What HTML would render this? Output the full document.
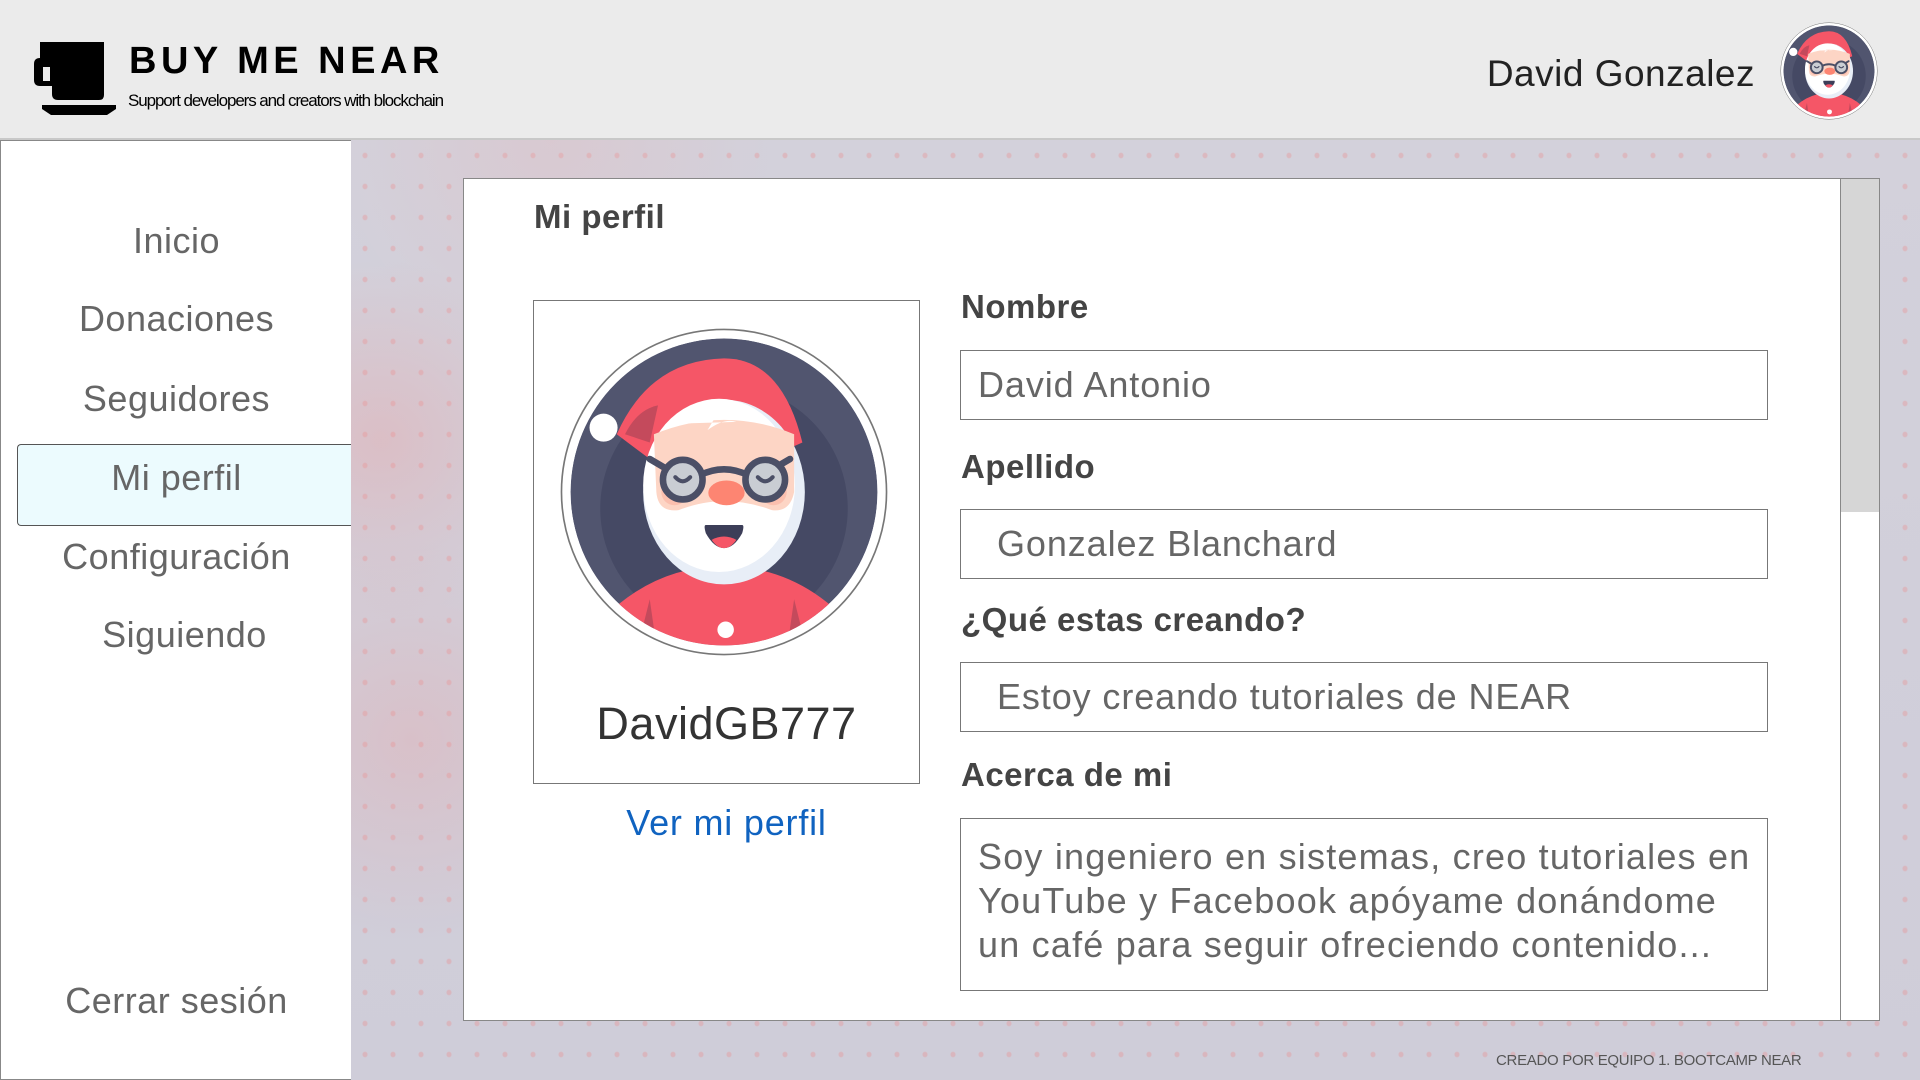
<!DOCTYPE html>
<html><head><meta charset="utf-8"><style>
*{margin:0;padding:0;box-sizing:border-box}
body{width:1920px;height:1080px;overflow:hidden;position:relative;font-family:"Liberation Sans",sans-serif;color:#555;background:#d2d0da;}
.bg{position:absolute;left:351px;top:140px;right:0;bottom:0;background:
radial-gradient(circle at 30px 300px,rgba(240,150,150,.3),transparent 180px),
radial-gradient(circle at 60px 600px,rgba(240,150,150,.25),transparent 200px),
radial-gradient(circle at 200px 0px,rgba(240,170,170,.2),transparent 220px),
radial-gradient(rgba(235,140,140,.35) 2px,transparent 3px) 0 0/28px 31px,
linear-gradient(#d3d1db,#cfcdd9);}
.hdr{position:absolute;left:0;top:0;width:1920px;height:140px;background:#ebebeb;border-bottom:2px solid #c8c8c8}
.side{position:absolute;left:0;top:140px;width:352px;height:940px;background:#fff;border:1px solid #888}
.mi{position:absolute;left:0;width:351px;text-align:center;font-size:36px;color:#666;transform:translateY(-50%);letter-spacing:0.5px}
.sel{position:absolute;left:16px;top:303px;width:336px;height:82px;background:#ecfbfe;border:1px solid #555;border-right:none;border-radius:4px 0 0 4px}
.panel{position:absolute;left:463px;top:178px;width:1378px;height:843px;background:#fff;border:1px solid #888}
.sb{position:absolute;left:1840px;top:178px;width:40px;height:843px;background:#fff;border:1px solid #888}
.sb div{height:333px;background:#d6d6d6}
.lab{position:absolute;left:961px;font-size:33px;font-weight:bold;color:#444;transform:translateY(-50%);letter-spacing:0.5px}
.inp{position:absolute;left:960px;width:808px;border:1px solid #777;font-size:36px;color:#666;padding-left:17px;display:flex;align-items:center;letter-spacing:0.9px}
</style></head><body>
<div class="hdr">
 <svg style="position:absolute;left:30px;top:40px" width="90" height="80" viewBox="0 0 90 80">
  <path d="M40 2H104V55Q104 60 99 60H58Q52 60 52 54V46H40Q34 46 34 40V24Q34 18 40 18H40Z" transform="translate(-30 0)" fill="#000"/>
  <rect x="13" y="27" width="7" height="14" fill="#ebebeb"/>
  <path d="M12 65H86V69L77 75H21L12 69Z" fill="#000"/>
 </svg>
 <div style="position:absolute;left:129px;top:40px;font-size:38px;font-weight:bold;letter-spacing:4.5px;color:#000">BUY ME NEAR</div>
 <div style="position:absolute;left:128px;top:91px;font-size:17px;color:#000;letter-spacing:-1.1px">Support developers and creators with blockchain</div>
 <div style="position:absolute;right:165px;top:53px;font-size:37px;color:#222;letter-spacing:0.5px">David Gonzalez</div>
 <svg style="position:absolute;left:1780px;top:22px" width="98" height="98" viewBox="0 0 400 400"><use href="#santa"/></svg>
</div>
<div class="side">
 <div class="sel"></div>
 <div class="mi" style="top:100px">Inicio</div>
 <div class="mi" style="top:178px">Donaciones</div>
 <div class="mi" style="top:258px">Seguidores</div>
 <div class="mi" style="top:337px">Mi perfil</div>
 <div class="mi" style="top:416px">Configuración</div>
 <div class="mi" style="top:494px;left:8px">Siguiendo</div>
 <div class="mi" style="top:860px">Cerrar sesión</div>
</div>
<div class="bg"></div>
<div class="panel"></div>
<div class="sb"><div></div></div>
<div style="position:absolute;left:534px;top:198px;font-size:33px;font-weight:bold;color:#444;letter-spacing:0.5px">Mi perfil</div>
<div style="position:absolute;left:533px;top:300px;width:387px;height:484px;border:1px solid #777;background:#fff"></div>
<svg style="position:absolute;left:559px;top:327px" width="330" height="330" viewBox="0 0 400 400">
 <defs><g id="santa">
  <circle cx="200" cy="200" r="197" fill="#fff" stroke="#777" stroke-width="2"/>
  <clipPath id="c"><circle cx="200" cy="200" r="186"/></clipPath>
  <g clip-path="url(#c)">
   <circle cx="200" cy="200" r="186" fill="#51556f"/>
   <circle cx="200" cy="220" r="150" fill="#454964"/>
   <path d="M30 380Q100 290 200 290Q300 290 370 380V420H30Z" fill="#f55667"/>
   <path d="M70 130Q110 40 200 38Q270 38 295 140L250 160H110Z" fill="#f55667"/>
   <path d="M80 130Q95 100 120 95L110 140Z" fill="#c44a5c"/>
   <ellipse cx="200" cy="200" rx="98" ry="112" fill="#e8eef7"/>
   <ellipse cx="194" cy="192" rx="92" ry="105" fill="#fff"/>
   <path d="M115 130Q200 95 285 130V200Q280 225 258 222Q200 200 145 222Q120 225 118 200Z" fill="#fdd5c5"/>
   <circle cx="140" cy="200" r="16" fill="#fbbfae"/><circle cx="260" cy="200" r="16" fill="#fbbfae"/>
   <path d="M150 117Q170 105 192 105L180 125Q200 110 215 115Z" fill="#fff"/>
   <path d="M110 160L127 170M280 160L263 170M170 180Q200 165 230 180" stroke="#4b4f66" stroke-width="8" stroke-linecap="round" fill="none"/>
   <circle cx="150" cy="185" r="24" fill="#c9cdd3" stroke="#4b4f66" stroke-width="8"/>
   <circle cx="250" cy="185" r="24" fill="#c9cdd3" stroke="#4b4f66" stroke-width="8"/>
   <path d="M141 182Q150 192 159 182M241 182Q250 192 259 182" stroke="#4b4f66" stroke-width="5" fill="none" stroke-linecap="round"/>
   <ellipse cx="203" cy="201" rx="22" ry="15" fill="#fd8572"/>
   <path d="M178 240H222Q225 240 222 250Q212 268 200 268Q188 268 178 250Q175 240 178 240Z" fill="#3c3e58"/>
   <path d="M185 258Q200 250 215 258Q208 268 200 268Q192 268 185 258Z" fill="#f55667"/>
   <circle cx="202" cy="367" r="10" fill="#fff"/>
   <path d="M95 390L110 330L120 400ZM300 390L285 330L275 400Z" fill="#c44a5c"/>
  </g>
  <circle cx="54" cy="122" r="17" fill="#fff"/>
 </g></defs>
 <use href="#santa"/>
</svg>
<div style="position:absolute;left:533px;width:387px;top:698px;text-align:center;font-size:45px;color:#333;letter-spacing:0.5px">DavidGB777</div>
<div style="position:absolute;left:533px;width:387px;top:802px;text-align:center;font-size:36px;color:#1063c0;letter-spacing:0.8px">Ver mi perfil</div>
<div class="lab" style="top:307px">Nombre</div>
<div class="inp" style="top:350px;height:70px">David Antonio</div>
<div class="lab" style="top:467px">Apellido</div>
<div class="inp" style="top:509px;height:70px;padding-left:36px">Gonzalez Blanchard</div>
<div class="lab" style="top:620px">¿Qué estas creando?</div>
<div class="inp" style="top:662px;height:70px;padding-left:36px">Estoy creando tutoriales de NEAR</div>
<div class="lab" style="top:775px">Acerca de mi</div>
<div class="inp" style="top:818px;height:173px;align-items:flex-start;padding-top:16px;line-height:44px;letter-spacing:1.2px">Soy ingeniero en sistemas, creo tutoriales en YouTube y Facebook apóyame donándome un café para seguir ofreciendo contenido...</div>
<div style="position:absolute;left:1496px;top:1052px;font-size:15px;color:#555;letter-spacing:-0.3px">CREADO POR EQUIPO 1. BOOTCAMP NEAR</div>
</body></html>
